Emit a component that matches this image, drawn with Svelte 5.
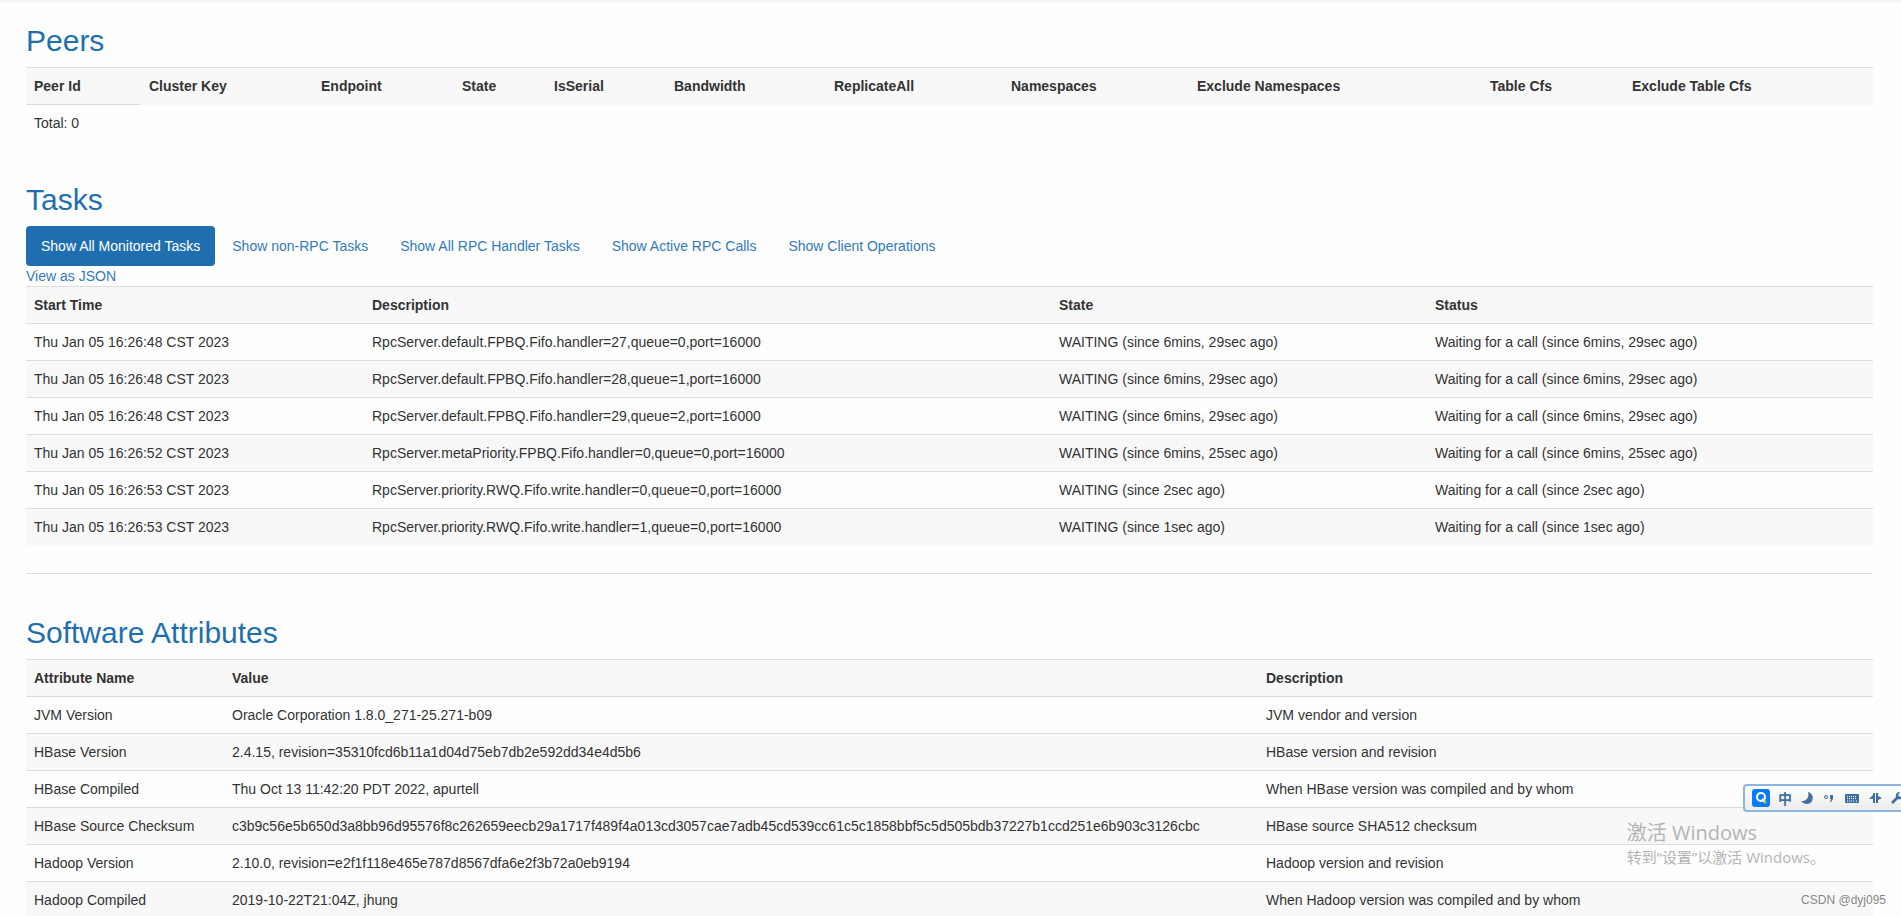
<script lang="ts">
    interface Column {
        label: string;
        weight: number;
    }

    const peerColumns: Column[] = [
        { label: "Peer Id", weight: 115 },
        { label: "Cluster Key", weight: 172 },
        { label: "Endpoint", weight: 141 },
        { label: "State", weight: 92 },
        { label: "IsSerial", weight: 120 },
        { label: "Bandwidth", weight: 160 },
        { label: "ReplicateAll", weight: 177 },
        { label: "Namespaces", weight: 186 },
        { label: "Exclude Namespaces", weight: 293 },
        { label: "Table Cfs", weight: 142 },
        { label: "Exclude Table Cfs", weight: 249 },
    ];

    const taskColumns: Column[] = [
        { label: "Start Time", weight: 338 },
        { label: "Description", weight: 687 },
        { label: "State", weight: 376 },
        { label: "Status", weight: 446 },
    ];

    const attributeColumns: Column[] = [
        { label: "Attribute Name", weight: 198 },
        { label: "Value", weight: 1034 },
        { label: "Description", weight: 615 },
    ];

    const filters = [
        "Show All Monitored Tasks",
        "Show non-RPC Tasks",
        "Show All RPC Handler Tasks",
        "Show Active RPC Calls",
        "Show Client Operations",
    ];

    const tasks = [
        { time: "16:26:48", handler: "default.FPBQ.Fifo.handler=27,queue=0", since: "6mins, 29sec" },
        { time: "16:26:48", handler: "default.FPBQ.Fifo.handler=28,queue=1", since: "6mins, 29sec" },
        { time: "16:26:48", handler: "default.FPBQ.Fifo.handler=29,queue=2", since: "6mins, 29sec" },
        { time: "16:26:52", handler: "metaPriority.FPBQ.Fifo.handler=0,queue=0", since: "6mins, 25sec" },
        { time: "16:26:53", handler: "priority.RWQ.Fifo.write.handler=0,queue=0", since: "2sec" },
        { time: "16:26:53", handler: "priority.RWQ.Fifo.write.handler=1,queue=0", since: "1sec" },
    ];

    const taskRows = tasks.map((t) => [
        `Thu Jan 05 ${t.time} CST 2023`,
        `RpcServer.${t.handler},port=16000`,
        `WAITING (since ${t.since} ago)`,
        `Waiting for a call (since ${t.since} ago)`,
    ]);

    const attributeRows = [
        ["JVM Version", "Oracle Corporation 1.8.0_271-25.271-b09", "JVM vendor and version"],
        ["HBase Version", "2.4.15, revision=35310fcd6b11a1d04d75eb7db2e592dd34e4d5b6", "HBase version and revision"],
        ["HBase Compiled", "Thu Oct 13 11:42:20 PDT 2022, apurtell", "When HBase version was compiled and by whom"],
        [
            "HBase Source Checksum",
            "c3b9c56e5b650d3a8bb96d95576f8c262659eecb29a1717f489f4a013cd3057cae7adb45cd539cc61c5c1858bbf5c5d505bdb37227b1ccd251e6b903c3126cbc",
            "HBase source SHA512 checksum",
        ],
        ["Hadoop Version", "2.10.0, revision=e2f1f118e465e787d8567dfa6e2f3b72a0eb9194", "Hadoop version and revision"],
        ["Hadoop Compiled", "2019-10-22T21:04Z, jhung", "When Hadoop version was compiled and by whom"],
    ];

    let activeFilter = $state(0);

    function share(columns: Column[], column: Column) {
        const total = columns.reduce((sum, c) => sum + c.weight, 0);
        return (column.weight / total) * 100;
    }
</script>

{#snippet dataTable(columns: Column[], rows: string[][])}
    <table class="table">
        <colgroup>
            {#each columns as column}
                <col style:width="{share(columns, column)}%" />
            {/each}
        </colgroup>
        <tbody>
            <tr>
                {#each columns as column}
                    <th scope="col">{column.label}</th>
                {/each}
            </tr>
            {#each rows as row}
                <tr>
                    {#each row as cell}
                        <td>{cell}</td>
                    {/each}
                </tr>
            {/each}
        </tbody>
    </table>
{/snippet}

<div class="page">
    <main class="container">
        <section class="section">
            <h2>Peers</h2>
            {@render dataTable(peerColumns, [["Total: 0"]])}
        </section>

        <section class="section">
            <h2>Tasks</h2>
            <ul class="pills">
                {#each filters as filter, i}
                    <li>
                        <a
                            href="#tasks-{i}"
                            class="pill"
                            class:pill--active={activeFilter === i}
                            onclick={() => (activeFilter = i)}>{filter}</a
                        >
                    </li>
                {/each}
            </ul>
            <a class="json-link" href="#json">View as JSON</a>
            {@render dataTable(taskColumns, taskRows)}
            <hr />
        </section>

        <section class="section">
            <h2>Software Attributes</h2>
            {@render dataTable(attributeColumns, attributeRows)}
        </section>
    </main>

    <div class="activation">
        <p class="activation__title">激活 Windows</p>
        <p class="activation__hint">转到“设置”以激活 Windows。</p>
    </div>

    <div class="ime">
        <svg class="ime__logo" viewBox="0 0 18 18" aria-hidden="true">
            <rect width="18" height="18" rx="3" fill="#0a7bff" />
            <circle cx="9" cy="8" r="4" fill="none" stroke="#fff" stroke-width="2" />
            <path d="M10 10l3 3" stroke="#fff" stroke-width="2" />
            <circle cx="13" cy="13" r="1.5" fill="#9be22d" />
        </svg>
        <span class="ime__lang">中</span>
        <svg class="ime__icon" viewBox="0 0 14 14" aria-hidden="true">
            <path d="M8 1c4 1 6 5 4 9-2 4-8 4-11 0 4 1 9-3 7-9z" />
        </svg>
        <svg class="ime__icon" viewBox="0 0 14 14" aria-hidden="true">
            <circle cx="4" cy="6" r="1.5" fill="none" stroke="#4070a0" />
            <path d="M8 4h3v4l-2 3H8l1-3H8z" />
        </svg>
        <svg class="ime__keyboard" viewBox="0 0 16 12" aria-hidden="true">
            <rect x="1" y="2" width="14" height="9" rx="1" />
            <path d="M3 4.5h10M3 6.5h10M3 9h1M5 9h5M12 9h1" stroke="#fff" stroke-dasharray="1 1" />
        </svg>
        <svg class="ime__icon" viewBox="0 0 14 14" aria-hidden="true">
            <path d="M5 2h2v10H5V8H1l4-4zM8 2h2v3l4 2-4 2v3H8z" />
        </svg>
        <svg class="ime__icon" viewBox="0 0 14 14" aria-hidden="true">
            <path d="M1 11l5-5c-1-3 1-5 4-5L8 4l2 2 3-2c0 3-2 5-5 4l-5 5z" />
        </svg>
    </div>

    <span class="watermark">CSDN @dyj095</span>
</div>

<style>
    :global(body) {
        margin: 0;
        background: #fefefe;
    }

    .page {
        position: relative;
        height: 100vh;
        overflow: hidden;
        box-sizing: border-box;
        padding-top: 4px;
        background: linear-gradient(#f2f2f2, #fefefe 4px);
        color: #333;
        font-family: "Liberation Sans", Arial, sans-serif;
        font-size: 14px;
        line-height: 20px;
    }

    .container {
        padding: 0 28px 0 26px;
    }

    .section {
        padding-top: 20px;
        margin-bottom: 22px;
    }

    h2 {
        margin: 0 0 10px;
        color: #1f6fb0;
        font-size: 30px;
        font-weight: 500;
        line-height: 33px;
    }

    .table {
        width: 100%;
        margin-bottom: 20px;
        table-layout: fixed;
        border-collapse: collapse;
    }

    .table th,
    .table td {
        padding: 8px;
        border-top: 1px solid #ddd;
        text-align: left;
        vertical-align: top;
        white-space: nowrap;
    }

    .table tr:nth-child(odd) {
        background: #f8f8f8;
    }

    .pills {
        display: flex;
        gap: 2px;
        margin: 0;
        padding: 0;
        list-style: none;
    }

    .pill {
        display: block;
        padding: 10px 15px;
        border-radius: 4px;
        color: #337ab7;
        text-decoration: none;
    }

    .pill--active {
        background: #1f6fb0;
        color: #fff;
    }

    .json-link {
        display: block;
        width: fit-content;
        color: #337ab7;
        text-decoration: none;
    }

    hr {
        margin: 28px 0 0;
        border: 0;
        border-top: 1px solid #ddd;
    }

    .activation {
        position: absolute;
        right: 76px;
        bottom: 48px;
        color: #b4b4b4;
        font-family: "Open Sans", "Noto Sans CJK SC", sans-serif;
    }

    .activation p {
        margin: 0;
    }

    .activation__title {
        font-size: 20px;
        line-height: 26px;
    }

    .activation__hint {
        font-size: 15px;
        line-height: 22px;
    }

    .ime {
        position: absolute;
        right: -12px;
        bottom: 104px;
        display: flex;
        align-items: center;
        gap: 8px;
        box-sizing: border-box;
        height: 28px;
        padding: 0 7px;
        border: 2px solid #8db4de;
        border-radius: 4px;
        background: linear-gradient(#fff, #ececec);
        fill: #4070a0;
    }

    .ime__logo {
        width: 18px;
        height: 18px;
    }

    .ime__lang {
        color: #4070a0;
        font-family: "Noto Sans CJK SC", sans-serif;
        font-weight: 700;
    }

    .ime__icon {
        width: 14px;
        height: 14px;
    }

    .ime__keyboard {
        width: 16px;
        height: 12px;
    }

    .watermark {
        position: absolute;
        right: 15px;
        bottom: 6px;
        color: #888;
        font-size: 12px;
    }
</style>
